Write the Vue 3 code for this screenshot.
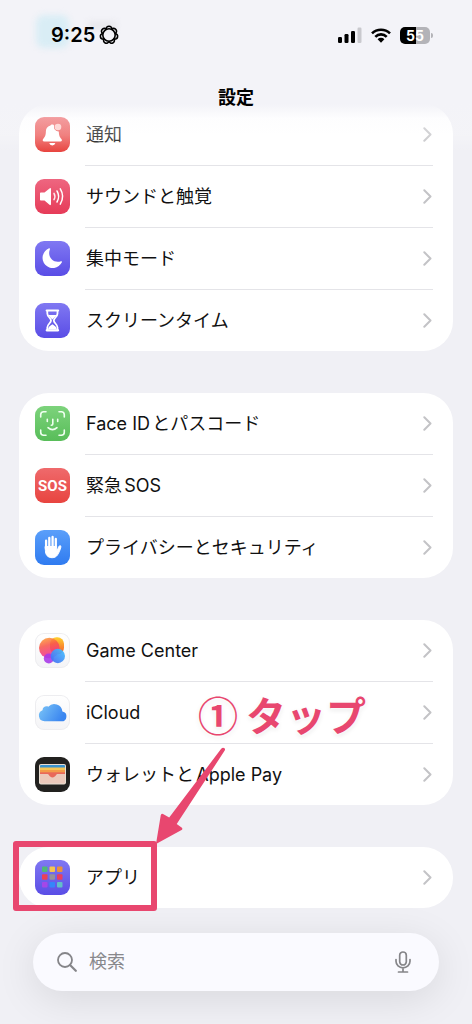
<template>
  <div class="phone">
    <!-- ヘッダー -->
    <header class="header">
      <span class="ghost-icon"></span>
      <span class="ghost-text"></span>
      <div class="status-bar">
        <div class="status-left">
          <span class="time">9:25</span>
          <svg class="focus" viewBox="0 0 20 20" aria-hidden="true">
            <g fill="none" stroke="#000" stroke-width="1.6">
              <circle cx="10" cy="10" r="6.2" />
              <path
                v-for="n in 7"
                :key="n"
                d="M7.200 4.600C6.600 .1 13.400 .1 12.800 4.600"
                :transform="`rotate(${(n - 1) * 360 / 7} 10 10)`"
              />
            </g>
          </svg>
        </div>
        <div class="status-right">
          <svg class="signal" viewBox="0 0 24 16" aria-hidden="true">
            <rect x="0" y="10" width="4" height="6" rx="1.2" />
            <rect x="6.5" y="7" width="4" height="9" rx="1.2" />
            <rect x="13" y="4" width="4" height="12" rx="1.2" />
            <rect x="19.5" y="0.5" width="4" height="15.5" rx="1.2" fill="#c9c9ce" />
          </svg>
          <svg class="wifi" viewBox="0 0 20 15" aria-hidden="true">
            <g fill="none" stroke="#000" stroke-width="2.6">
              <path d="M1 5.4A12.8 12.8 0 0 1 19 5.4" />
              <path d="M4.3 8.8A8 8 0 0 1 15.7 8.8" />
            </g>
            <path d="M6.6 11.2a4.8 4.8 0 0 1 6.8 0L10 14.7z" />
          </svg>
          <div class="battery"><span>55</span></div>
        </div>
      </div>
      <h1 class="title">設定</h1>
    </header>

    <!-- 設定リスト -->
    <main class="list">
      <ul v-for="(group, i) in groups" :key="i" class="card">
        <li v-for="item in group" :key="item.icon" class="item">
          <a href="#" class="row">
            <span class="tile" :class="item.icon">
              <span v-if="item.icon === 'sos'" class="sos-text">SOS</span>
              <svg v-else viewBox="0 0 35 35" aria-hidden="true">
                <template v-if="item.icon === 'bell'">
                  <path fill="#fff" d="M17.3 7.4c.9 0 1.6.4 1.8 1.1a4.7 4.7 0 0 0 4.7 6c.2 4.2.9 5.6 2.6 7.5.9 1 .6 2.6-1 2.6H9.2c-1.6 0-1.9-1.6-1-2.6 2-2.2 2.6-3.8 2.7-7.9.1-3 1.9-5.2 4.6-5.7.2-.6.9-1 1.8-1z" />
                  <path fill="#fff" d="M14.2 26h6.2a3.2 3.2 0 0 1-6.2 0z" />
                  <circle cx="23" cy="10" r="3.3" fill="#ffc9c6" />
                </template>
                <template v-else-if="item.icon === 'sound'">
                  <path fill="#fff" d="M5 14.3q0-.8.8-.8h3.7l5-4.1q1.5-1 1.5.7v15q0 1.700-1.5.7l-5-4.2H5.800q-.8 0-.8-.8z" />
                  <g fill="none" stroke="#fff" stroke-width="1.5" stroke-linecap="round">
                    <path d="M19 14.3q1.8 3.2 0 6.4" opacity=".9" />
                    <path d="M22 12q3.3 5.5 0 11" />
                    <path d="M25.3 9.900q4.700 7.600 0 15.200" />
                  </g>
                </template>
                <path
                  v-else-if="item.icon === 'moon'"
                  fill="#fff"
                  d="M14 7.300c.6-.3 1.200.2.900.9-3 7.500 3.300 14.600 11.100 12 .8-.2 1.300.4.900 1.100A10.200 10.200 0 1 1 14 7.300z"
                />
                <template v-else-if="item.icon === 'hourglass'">
                  <path
                    fill="none"
                    stroke="#fff"
                    stroke-width="1.8"
                    stroke-linejoin="round"
                    d="M12.300 8v2.500c0 3.300 3.700 4.500 3.700 7s-3.700 3.700-3.700 7V27M22.500 8v2.500c0 3.300-3.700 4.500-3.700 7s3.700 3.700 3.700 7V27"
                  />
                  <path stroke="#fff" stroke-width="2.2" stroke-linecap="round" d="M11.700 7.500h11.400M11.700 27.300h11.400" />
                  <path fill="#fff" d="M13.300 12h8.200q-1.200 1.900-4.100 4.600-2.900-2.700-4.100-4.600zM13 26.500c.3-2.600 1.800-3.600 4.400-5.300 2.600 1.700 4.100 2.700 4.400 5.300z" />
                </template>
                <g
                  v-else-if="item.icon === 'face'"
                  fill="none"
                  stroke="#effff0"
                  stroke-width="1.6"
                  stroke-linecap="round"
                >
                  <path d="M5.700 11V8.700q0-3 3-3H11M24 5.700h2.300q3 0 3 3V11M29.300 24v2.300q0 3-3 3H24M11 29.300H8.700q-3 0-3-3V24" />
                  <path d="M12.300 13.300v2.200M22.700 13.300v2.200M17.800 13.300v4.700q0 1.200-1.500 1.200M13 21.700q4.500 4 9 0" />
                </g>
                <g v-else-if="item.icon === 'hand'" stroke="#fff" stroke-linecap="round" stroke-linejoin="round">
                  <path fill="none" stroke-width="2.3" d="M11.100 19v-8.300M14.300 17V8M17.600 17V7M20.800 17V9" />
                  <path
                    fill="#fff"
                    stroke-width="1"
                    d="M10.400 16.500h11.300v4.400c.7-.9 1.500-2.600 2.200-4.400.6-1.400 2.300-.9 2 .5-.7 2.800-1.900 5.700-3.300 7.800-1.200 1.900-3 2.900-5.400 2.900-4.400 0-6.800-2.700-6.800-7z"
                  />
                </g>
                <template v-else-if="item.icon === 'game'">
                  <defs>
                    <linearGradient id="gamePink" x1="0" y1="0" x2=".3" y2="1">
                      <stop offset="0" stop-color="#ffad32" />
                      <stop offset=".45" stop-color="#f8574d" />
                      <stop offset="1" stop-color="#ef2f9c" />
                    </linearGradient>
                    <linearGradient id="gameYellow" x1="0" y1="0" x2="0" y2="1">
                      <stop offset="0" stop-color="#ffd02e" />
                      <stop offset="1" stop-color="#f4522d" />
                    </linearGradient>
                    <linearGradient id="gameBlue" x1="1" y1="0" x2="0" y2="1">
                      <stop offset="0" stop-color="#43c5ff" />
                      <stop offset="1" stop-color="#4566f2" />
                    </linearGradient>
                  </defs>
                  <rect x="15" y="4.300" width="14" height="17" rx="6.500" fill="url(#gameYellow)" />
                  <circle cx="14.300" cy="15" r="10.300" fill="url(#gamePink)" opacity=".88" />
                  <circle cx="13.800" cy="25.500" r="5" fill="#a83be8" opacity=".9" />
                  <circle cx="22.800" cy="23" r="7.200" fill="url(#gameBlue)" opacity=".93" />
                </template>
                <template v-else-if="item.icon === 'cloud'">
                  <defs>
                    <linearGradient id="cloudBlue" x1="0" y1="0" x2="1" y2=".4">
                      <stop offset="0" stop-color="#7dc7f7" />
                      <stop offset="1" stop-color="#3b86f0" />
                    </linearGradient>
                  </defs>
                  <path fill="url(#cloudBlue)" d="M9.500 26.300a5.700 5.700 0 0 1-2-11c.1-3 3.200-4.800 5.800-3.600a8.200 8.200 0 0 1 14.100 4.700 5 5 0 0 1-1.200 9.900z" />
                </template>
                <template v-else-if="item.icon === 'wallet'">
                  <rect x="4" y="7" width="27" height="20.500" rx="2" fill="#e8ded2" />
                  <rect x="5" y="8" width="25" height="5" rx="1" fill="#3a94cf" />
                  <rect x="5" y="10.500" width="25" height="5" fill="#f6c453" />
                  <rect x="5" y="13" width="25" height="5" fill="#f39b4a" />
                  <rect x="5" y="15.300" width="25" height="6" fill="#e9685a" />
                  <path fill="#ecc9bb" d="M5 17h7.600c1.500 0 1.600 3.400 4.900 3.400s3.400-3.400 4.900-3.400H30v8.500q0 1-1 1H6q-1 0-1-1z" />
                </template>
                <template v-else>
                  <rect
                    v-for="(color, n) in appColors"
                    :key="n"
                    :x="7 + (n % 3) * 7.5"
                    :y="6.5 + Math.floor(n / 3) * 7.7"
                    width="5.5"
                    height="5.5"
                    rx="1"
                    :fill="color"
                  />
                </template>
              </svg>
            </span>
            <span class="label">{{ item.label }}</span>
            <svg class="chevron" viewBox="0 0 9 15" aria-hidden="true">
              <path d="M1.3 1.3 7.5 7.5 1.3 13.7" />
            </svg>
          </a>
        </li>

        <!-- 手順の吹き出し -->
        <li v-if="i === groups.length - 1" class="guide">
          <span class="guide-frame"></span>
          <svg class="guide-arrow" viewBox="0 0 80 104" aria-hidden="true">
            <path d="M70 9q1.800-2.200 3.500-.8 1 1 .2 2.400L25.700 84l5.200 3.800q1.200 1.600-.8 2.400L5 104 9.800 75q1-2 2.700-.8l5.700 3.300z" />
          </svg>
          <p class="guide-text"><span>①</span><span>タップ</span></p>
        </li>
      </ul>
    </main>

    <!-- 検索 -->
    <form class="search" @submit.prevent>
      <svg class="search-icon" viewBox="0 0 20 20" aria-hidden="true">
        <circle cx="8" cy="8" r="7" />
        <path d="m13 13 5.800 5.800" stroke-width="2.2" />
      </svg>
      <input v-model="keyword" type="text" placeholder="検索" aria-label="検索" />
      <button type="button" class="mic" aria-label="音声入力">
        <svg viewBox="0 0 16 22" aria-hidden="true">
          <rect x="4.7" y="1" width="6.6" height="13" rx="3.3" />
          <path d="M1 8.500v1.800a7 6.500 0 0 0 14 0V8.500M8 17v3.700M3.500 21h9" />
        </svg>
      </button>
    </form>
  </div>
</template>

<script setup>
import { ref } from 'vue'

const keyword = ref('')

const groups = [
  [
    { icon: 'bell', label: '通知' },
    { icon: 'sound', label: 'サウンドと触覚' },
    { icon: 'moon', label: '集中モード' },
    { icon: 'hourglass', label: 'スクリーンタイム' }
  ],
  [
    { icon: 'face', label: 'Face IDとパスコード' },
    { icon: 'sos', label: '緊急SOS' },
    { icon: 'hand', label: 'プライバシーとセキュリティ' }
  ],
  [
    { icon: 'game', label: 'Game Center' },
    { icon: 'cloud', label: 'iCloud' },
    { icon: 'wallet', label: 'ウォレットとApple Pay' }
  ],
  [{ icon: 'apps', label: 'アプリ' }]
]

const appColors = [
  '#50b878', '#f5c451', '#e8913f',
  '#ec4056', '#96919c', '#e83e62',
  '#a447e8', '#3585fa', '#62bfc8'
]
</script>

<style>
body {
  margin: 0;
  background: #f0f0f5;
}
</style>

<style scoped>
.phone {
  min-height: 100vh;
  box-sizing: border-box;
  padding-bottom: 33px;
  overflow: hidden;
  color: #111;
  background: #f0f0f5;
  font-family: Inter, "Noto Sans CJK JP", sans-serif;
  text-autospace: normal;
}

/* ヘッダー */
.header {
  position: relative;
  z-index: 2;
  height: 104px;
  background: #f3f3f8;
}

/* リスト上端のフェード */
.header::after {
  content: "";
  position: absolute;
  top: 100%;
  left: 0;
  right: 0;
  height: 48px;
  background: linear-gradient(#f3f3f8, rgba(250, 250, 253, 0.35) 30%, rgba(255, 255, 255, 0.25) 65%, rgba(255, 255, 255, 0));
  pointer-events: none;
}

.ghost-icon,
.ghost-text {
  position: absolute;
  filter: blur(3px);
}

.ghost-icon {
  top: 15px;
  left: 36px;
  width: 33px;
  height: 33px;
  border-radius: 8px;
  background: #d9edf5;
}

.ghost-text {
  top: 22px;
  left: 88px;
  width: 28px;
  height: 7px;
  background: #e6e6ea;
}

.status-bar {
  position: relative;
  display: flex;
  align-items: center;
  justify-content: space-between;
  height: 70px;
  padding: 0 39px 0 51px;
}

.status-left,
.status-right {
  display: flex;
  align-items: center;
}

.status-left {
  gap: 4px;
}

.status-right {
  gap: 9px;
}

.time {
  color: #000;
  font-size: 20px;
  font-weight: 600;
  line-height: 24px;
}

.focus {
  width: 20px;
  height: 20px;
  overflow: visible;
}

.signal {
  width: 24px;
  height: 16px;
}

.wifi {
  width: 20px;
  height: 15px;
}

.battery {
  position: relative;
  width: 30px;
  height: 17px;
  margin-right: 3px;
  border-radius: 5px;
  background: linear-gradient(90deg, #000 55%, #b3b3b8 55%);
  color: #fff;
  font-size: 14px;
  font-weight: 700;
  line-height: 17px;
  text-align: center;
}

.battery::after {
  content: "";
  position: absolute;
  top: 6px;
  right: -3px;
  width: 2px;
  height: 5px;
  border-radius: 0 2px 2px 0;
  background: #b3b3b8;
}

.title {
  position: relative;
  z-index: 1;
  margin: 0;
  padding-top: 15px;
  color: #000;
  font-size: 18px;
  font-weight: 600;
  line-height: 26px;
  text-align: center;
}

/* リスト */
.list {
  display: flex;
  flex-direction: column;
  gap: 42px;
  padding: 0 19px;
}

.card {
  position: relative;
  margin: 0;
  padding: 0;
  border-radius: 30px;
  background: #fff;
  list-style: none;
}

.item + .item::before {
  content: "";
  display: block;
  height: 1px;
  margin: 0 20px 0 66px;
  background: #e4e4e8;
}

.row {
  display: flex;
  align-items: center;
  height: 61px;
  padding: 0 21px 0 16px;
  color: inherit;
  text-decoration: none;
}

.tile {
  display: flex;
  align-items: center;
  justify-content: center;
  width: 35px;
  height: 35px;
  border-radius: 9px;
  overflow: hidden;
}

.tile svg {
  width: 35px;
  height: 35px;
}

.bell,
.sos {
  background: linear-gradient(#ef6a6c, #e8443f);
}

.sound {
  background: linear-gradient(#ee6680, #e63b58);
}

.moon,
.hourglass,
.apps {
  background: linear-gradient(#8078f2, #5a4de6);
}

.face {
  background: linear-gradient(#7dd37c, #58bd59);
}

.hand {
  background: linear-gradient(#5a9ffa, #2f7bf0);
}

.game,
.cloud {
  background: linear-gradient(#fff, #f4f4f6);
  box-shadow: inset 0 0 0 1px #ededf0;
}

.wallet {
  background: #22211f;
}

.sos-text {
  color: #fff;
  font-family: Roboto, sans-serif;
  font-size: 15px;
  font-weight: 700;
  line-height: 20px;
}

.label {
  flex: 1;
  margin-left: 16px;
  font-size: 18px;
  line-height: 26px;
}

.chevron {
  width: 9px;
  height: 15px;
  fill: none;
  stroke: #c3c3c6;
  stroke-width: 2;
  stroke-linecap: round;
  stroke-linejoin: round;
}

/* 手順の吹き出し */
.guide {
  position: absolute;
  top: 0;
  left: 0;
  color: #e8476f;
  pointer-events: none;
}

.guide-frame {
  position: absolute;
  top: -6px;
  left: -6px;
  box-sizing: border-box;
  width: 144px;
  height: 70px;
  border: 6px solid currentColor;
  border-radius: 3px;
}

.guide-arrow {
  position: absolute;
  top: -107px;
  left: 132px;
  width: 80px;
  height: 104px;
  fill: currentColor;
}

.guide-text {
  position: absolute;
  top: -161px;
  left: 179px;
  display: flex;
  gap: 8px;
  margin: 0;
  font-family: "Noto Sans CJK JP", sans-serif;
  font-size: 40px;
  font-weight: 700;
  line-height: 56px;
  white-space: nowrap;
  text-shadow: 0 0 3px #fff, 0 0 4px #fff, 0 2px 5px rgba(0, 0, 0, 0.1);
}

/* 検索 */
.search {
  display: flex;
  align-items: center;
  box-sizing: border-box;
  height: 58px;
  margin: 25px 33px 0;
  padding: 0 28px 0 24px;
  border-radius: 29px;
  background: #fafaff;
  box-shadow: 0 8px 40px rgba(0, 0, 0, 0.1);
}

.search-icon {
  width: 20px;
  height: 20px;
  fill: none;
  stroke: #858589;
  stroke-width: 1.8;
  stroke-linecap: round;
}

.search input {
  flex: 1;
  min-width: 0;
  margin-left: 12px;
  padding: 0;
  border: 0;
  outline: 0;
  background: none;
  color: #111;
  font: inherit;
  font-size: 18px;
  line-height: 26px;
}

.search input::placeholder {
  color: #88888c;
  opacity: 1;
}

.mic {
  display: flex;
  padding: 0;
  border: 0;
  background: none;
}

.mic svg {
  width: 16px;
  height: 22px;
  fill: none;
  stroke: #858589;
  stroke-width: 1.7;
  stroke-linecap: round;
}
</style>
